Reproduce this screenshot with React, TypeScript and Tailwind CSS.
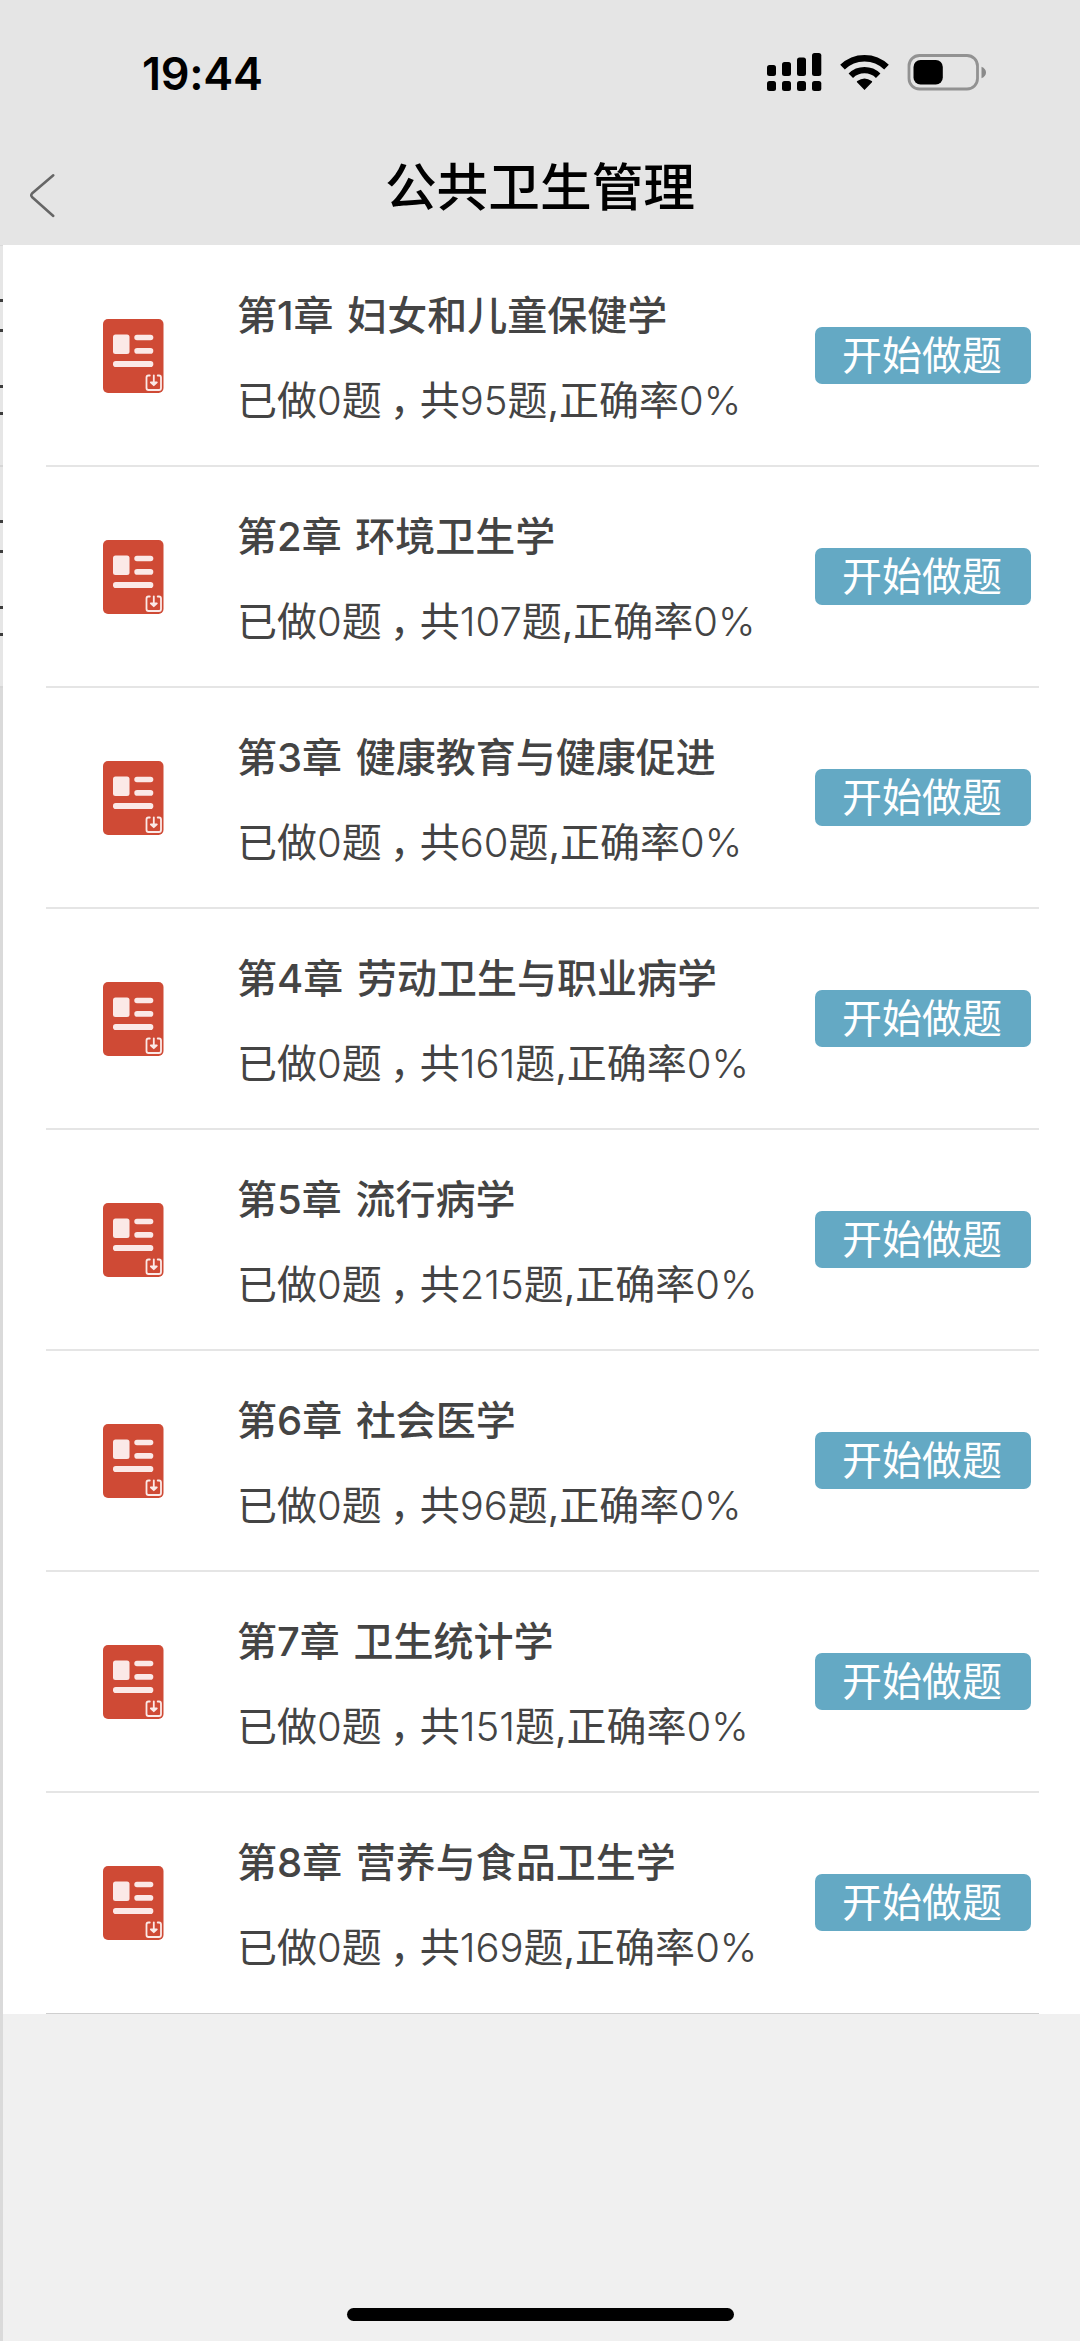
import type { ReactNode } from "react";

const chapters = [
  { no: 1, title: "妇女和儿童保健学", total: 95 },
  { no: 2, title: "环境卫生学", total: 107 },
  { no: 3, title: "健康教育与健康促进", total: 60 },
  { no: 4, title: "劳动卫生与职业病学", total: 161 },
  { no: 5, title: "流行病学", total: 215 },
  { no: 6, title: "社会医学", total: 96 },
  { no: 7, title: "卫生统计学", total: 151 },
  { no: 8, title: "营养与食品卫生学", total: 169 },
];

function StatusIcons() {
  return (
    <svg width="226" height="50" viewBox="764 48 226 50" fill="none">
      <g fill="#000">
        <rect x="767" y="65" width="9" height="11" rx="2.5" />
        <rect x="782" y="62" width="9" height="14" rx="2.5" />
        <rect x="797" y="57.5" width="9" height="18.5" rx="2.5" />
        <rect x="812" y="53" width="9.3" height="23" rx="2.5" />
        <rect x="767" y="81" width="9" height="10" rx="2.5" />
        <rect x="782" y="81" width="9" height="10" rx="2.5" />
        <rect x="797" y="81" width="9" height="10" rx="2.5" />
        <rect x="812" y="81" width="9.3" height="10" rx="2.5" />
        <path d="M864.5 90 L857 82.2 Q856.5 81.5 857.3 81 Q864.5 76 871.7 81 Q872.5 81.5 872 82.2 Z" />
      </g>
      <path d="M842.5 67.2 A31.5 31.5 0 0 1 886.5 67.2" stroke="#000" strokeWidth="6.6" />
      <path d="M850.8 75.7 A19.7 19.7 0 0 1 878.2 75.7" stroke="#000" strokeWidth="6.4" />
      <rect x="909" y="55.5" width="68.5" height="33.5" rx="10.5" stroke="#929292" strokeWidth="2.8" />
      <rect x="913.5" y="60" width="29.3" height="24.5" rx="7" fill="#000" />
      <path d="M981.5 66.8 C987.5 69 987.5 76 981.5 78.3 Z" fill="#8a8a8a" />
    </svg>
  );
}

function PaperIcon() {
  return (
    <svg width="61" height="74" viewBox="0 0 61 74" fill="none" className="shrink-0">
      <rect width="60.5" height="74" rx="5" fill="#cf4a35" />
      <g fill="#fbe9e7">
        <rect x="10" y="15.5" width="16.5" height="19.5" rx="2.5" />
        <rect x="31.3" y="15.8" width="19" height="5.5" rx="2.7" />
        <rect x="31.3" y="29" width="19" height="5.7" rx="2.8" />
        <rect x="10" y="42" width="40.3" height="6" rx="2.8" />
      </g>
      <g stroke="#fbe9e7" strokeWidth="1.8" strokeLinecap="round" strokeLinejoin="round">
        <path d="M46.8 56.5 H45.5 Q43.5 56.5 43.5 58.5 V69 Q43.5 71 45.5 71 H56 Q58 71 58 69 V58.5 Q58 56.5 56 56.5 H54.7" />
        <path d="M50.8 56.5 V65" />
        <path d="M47.8 63.3 L50.8 66.2 L53.8 63.3 Z" fill="#fbe9e7" />
      </g>
    </svg>
  );
}

// sliver of the page underneath, still visible on the left edge
function EdgeStrip() {
  return (
    <div className="w-[3px] shrink-0 bg-[#dadada] pt-px">
      {[0, 1].map((i) => (
        <div key={i} className="flex h-[221px] flex-col border-b-2 border-[#d6d6d6] bg-[#e6e6e6]">
          <div className="mt-[53px] h-[3px] bg-[#3c3c3c]" />
          <div className="mt-[27px] h-[3px] bg-[#3c3c3c]" />
          <div className="mt-[53px] h-[3px] bg-[#3c3c3c]" />
          <div className="mt-[24px] h-[3px] bg-[#3c3c3c]" />
        </div>
      ))}
    </div>
  );
}

function Num({ children }: { children: ReactNode }) {
  return <span className="font-[350]">{children}</span>;
}

export default function App() {
  return (
    <div className="relative flex h-[2341px] w-[1080px] flex-col overflow-hidden bg-[#f0f0f0] font-['Inter','Noto_Sans_CJK_SC',sans-serif]">
      <header className="h-[245px] shrink-0 bg-[#e5e5e5]">
        <div className="flex h-[146px] items-center justify-between pr-[90px] pl-[142px]">
          <span className="text-[45px] leading-none font-semibold tracking-[-0.3px] text-black">19:44</span>
          <StatusIcons />
        </div>
        <div className="grid h-[99px] grid-cols-[1fr_auto_1fr] items-start">
          <svg width="30" height="46" viewBox="0 0 30 46" fill="none" className="mt-[26px] ml-[28px]">
            <path d="M25.3 3.2 L4 21.5 Q2.5 23.3 4 25 L25.3 44" stroke="#666" strokeWidth="2.5" strokeLinecap="round" />
          </svg>
          <h1 className="mt-[4px] text-[51.7px] leading-[75px] font-medium text-black">公共卫生管理</h1>
        </div>
      </header>
      <div className="flex flex-1">
        <EdgeStrip />
        <main className="flex-1">
          <div className="bg-white pt-px">
            {chapters.map((c) => (
              <div key={c.no} className="group h-[221px] pr-[41px] pl-[43px]">
                <div className="flex h-full items-center border-b-2 border-[#e5e5e5] pr-[8px] pl-[57px] group-last:border-b group-last:border-[#cfcfcf] group-last:pb-px">
                  <PaperIcon />
                  <div className="ml-[73px] flex flex-1 flex-col pt-[5px] whitespace-nowrap text-[#444]">
                    <h2 className="mb-[25px] text-[40px] leading-[60px] font-medium [word-spacing:3px]">
                      第{c.no}章 {c.title}
                    </h2>
                    <p className="text-[40px] leading-[60px]">
                      已做<Num>0</Num>题
                      <span className="pr-[10px] pl-[8px] [font-feature-settings:'halt']">，</span>共
                      <Num>{c.total}</Num>题,正确率<Num>0%</Num>
                    </p>
                  </div>
                  <button className="h-[57px] w-[216px] rounded-[7px] bg-[#64a9c4] pr-[2px] text-[40px] leading-[57px] text-white">
                    开始做题
                  </button>
                </div>
              </div>
            ))}
          </div>
        </main>
      </div>
      <div className="absolute bottom-[20px] left-[347px] h-[13px] w-[387px] rounded-full bg-black" />
    </div>
  );
}
